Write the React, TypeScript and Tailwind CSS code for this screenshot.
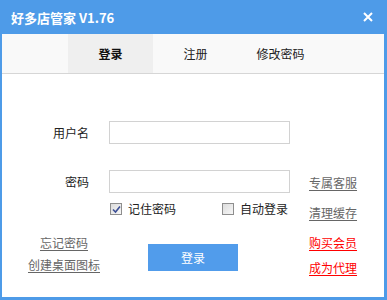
import React from 'react';

const FONT = { fontFamily: '"Noto Sans CJK SC", "Noto Sans", sans-serif' };

// 复选框
function Check({ checked, label }: { checked?: boolean; label: string }) {
  return (
    <label className="flex items-center gap-[6px] text-[12px] leading-[16px] text-[#222]">
      <span className="w-[12px] h-[12px] border border-[#8e8e8e] bg-gradient-to-br from-[#dcdcdc] to-[#f7f7f7] flex items-center justify-center">
        {checked && (
          <svg width="9" height="9" viewBox="0 0 9 9">
            <path d="M1 4.5 L3.5 7 L8 1.5" stroke="#3c4f95" strokeWidth="1.6" fill="none" />
          </svg>
        )}
      </span>
      <span>{label}</span>
    </label>
  );
}

export default function App() {
  return (
    <div className="w-[387px] h-[300px] bg-[#4e9be8] flex flex-col" style={FONT}>
      {/* 标题栏 */}
      <div className="h-[34px] flex items-center justify-between pl-[11px] pr-[14px] text-white">
        <span className="text-[13px] font-bold leading-none">好多店管家 V1.76</span>
        <svg width="10" height="10" viewBox="0 0 10 10">
          <path d="M1 1 L9 9 M9 1 L1 9" stroke="white" strokeWidth="2" />
        </svg>
      </div>

      <div className="ml-[2px] mr-[3px] mb-[3px] flex-1 bg-white flex flex-col">
        {/* 选项卡 */}
        <div className="h-[40px] bg-[#f9f9f9] border-b border-[#d6d6d6] pl-[66px] flex text-[12px]">
          <div className="w-[85px] bg-[#efefef] flex items-center justify-center font-bold text-[#111]">登录</div>
          <div className="w-[85px] flex items-center justify-center text-[#222]">注册</div>
          <div className="w-[85px] flex items-center justify-center text-[#222]">修改密码</div>
        </div>

        {/* 用户名 */}
        <div className="mt-[47px] flex items-center h-[23px] text-[12px] text-[#222]">
          <span className="w-[87px] text-right">用户名</span>
          <input className="ml-[20px] w-[181px] h-[23px] border border-[#d2d2d2] outline-none" />
        </div>

        {/* 密码 */}
        <div className="mt-[26px] flex items-center h-[23px] text-[12px] text-[#222]">
          <span className="w-[87px] text-right">密码</span>
          <input type="password" className="ml-[20px] w-[181px] h-[23px] border border-[#d2d2d2] outline-none" />
          <a className="ml-[19px] mt-[3px] text-[#666] underline underline-offset-2">专属客服</a>
        </div>

        {/* 记住密码 / 自动登录 */}
        <div className="mt-[8px] flex items-start h-[16px]">
          <div className="ml-[108px] w-[112px]">
            <Check checked label="记住密码" />
          </div>
          <div className="w-[87px]">
            <Check label="自动登录" />
          </div>
          <a className="mt-[4px] text-[12px] leading-[16px] text-[#666] underline underline-offset-2">清理缓存</a>
        </div>

        {/* 底部 */}
        <div className="mt-[17px] flex items-start text-[12px] leading-[18px]">
          <div className="w-[124px] flex flex-col items-center gap-[4px] text-[#666]">
            <a className="underline underline-offset-2">忘记密码</a>
            <a className="underline underline-offset-2">创建桌面图标</a>
          </div>
          <button className="ml-[22px] mt-[10px] w-[90px] h-[27px] bg-[#519ceb] text-white text-[12px]">登录</button>
          <div className="ml-[71px] flex flex-col gap-[7px] text-[#ff0000]">
            <a className="underline underline-offset-2">购买会员</a>
            <a className="underline underline-offset-2">成为代理</a>
          </div>
        </div>
      </div>
    </div>
  );
}
